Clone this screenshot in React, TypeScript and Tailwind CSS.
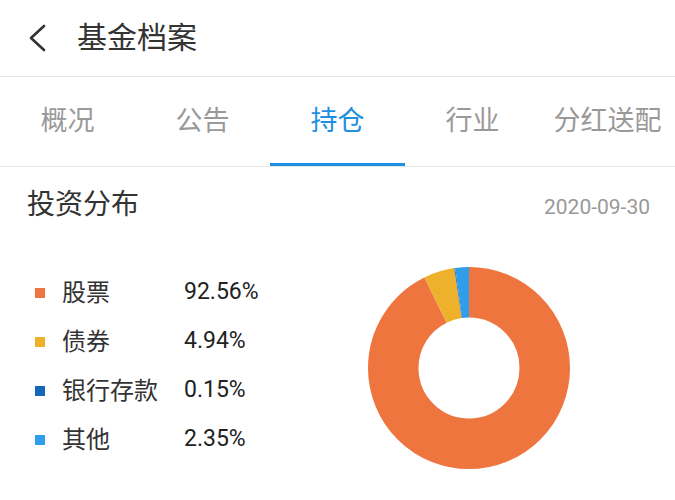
import React from 'react';

const tabs = ['概况', '公告', '持仓', '行业', '分红送配'];

const items = [
  { name: '股票', value: 92.56, color: '#EF753F' },
  { name: '债券', value: 4.94, color: '#EEB12B' },
  { name: '银行存款', value: 0.15, color: '#1368B8' },
  { name: '其他', value: 2.35, color: '#2F9DEA' },
];

function Donut() {
  const r = 75.75;
  const c = 2 * Math.PI * r;
  const total = items.reduce((s, i) => s + i.value, 0);
  let offset = 0;
  return (
    <svg width="202" height="202" viewBox="0 0 202 202">
      <g transform="rotate(-90 101 101)">
        {items.map((it) => {
          const len = (it.value / total) * c;
          const el = (
            <circle
              key={it.name}
              cx="101"
              cy="101"
              r={r}
              fill="none"
              stroke={it.color}
              strokeWidth="50.5"
              strokeDasharray={`${len} ${c - len}`}
              strokeDashoffset={-offset}
            />
          );
          offset += len;
          return el;
        })}
      </g>
    </svg>
  );
}

export default function App() {
  return (
    <div className="w-[675px] h-[500px] bg-white overflow-hidden text-[#333] font-['Roboto','Noto_Sans_CJK_SC',sans-serif]">
      {/* Header */}
      <div className="h-[77px] flex items-center border-b border-[#e6e6e6]">
        <svg width="20" height="28" viewBox="0 0 20 28" className="ml-[27px]">
          <path d="M17 2 L4 14 L17 26" fill="none" stroke="#333" strokeWidth="2.6" strokeLinecap="round" strokeLinejoin="round" />
        </svg>
        <span className="ml-[30px] text-[30px] leading-none">基金档案</span>
      </div>

      {/* Tabs */}
      <div className="h-[90px] flex border-b border-[#e6e6e6]">
        {tabs.map((t, i) => (
          <div
            key={t}
            className={
              i === 2
                ? 'w-[135px] flex items-center justify-center text-[27px] text-[#1E8FE1] border-b-[3px] border-[#1E8FE1] pt-[3px]'
                : 'w-[135px] flex items-center justify-center text-[27px] text-[#999]'
            }
          >
            {t}
          </div>
        ))}
      </div>

      {/* Section header */}
      <div className="flex items-center justify-between px-[27px] pt-[18px]">
        <span className="text-[28px] leading-[40px]">投资分布</span>
        <span className="text-[21px] text-[#999] pt-[6px] mr-[-2px]">2020-09-30</span>
      </div>

      {/* Content */}
      <div className="flex mt-[43px]">
        <div className="w-[340px] pl-[35px] flex flex-col">
          {items.map((it) => (
            <div key={it.name} className="h-[49px] flex items-center">
              <span className="w-[10px] h-[10px]" style={{ backgroundColor: it.color }} />
              <span className="ml-[17px] w-[122px] text-[24px]">{it.name}</span>
              <span className="text-[23px] text-[#222]">{it.value.toFixed(2)}%</span>
            </div>
          ))}
        </div>
        <div className="ml-[28px] -mt-[1px]">
          <Donut />
        </div>
      </div>
    </div>
  );
}
